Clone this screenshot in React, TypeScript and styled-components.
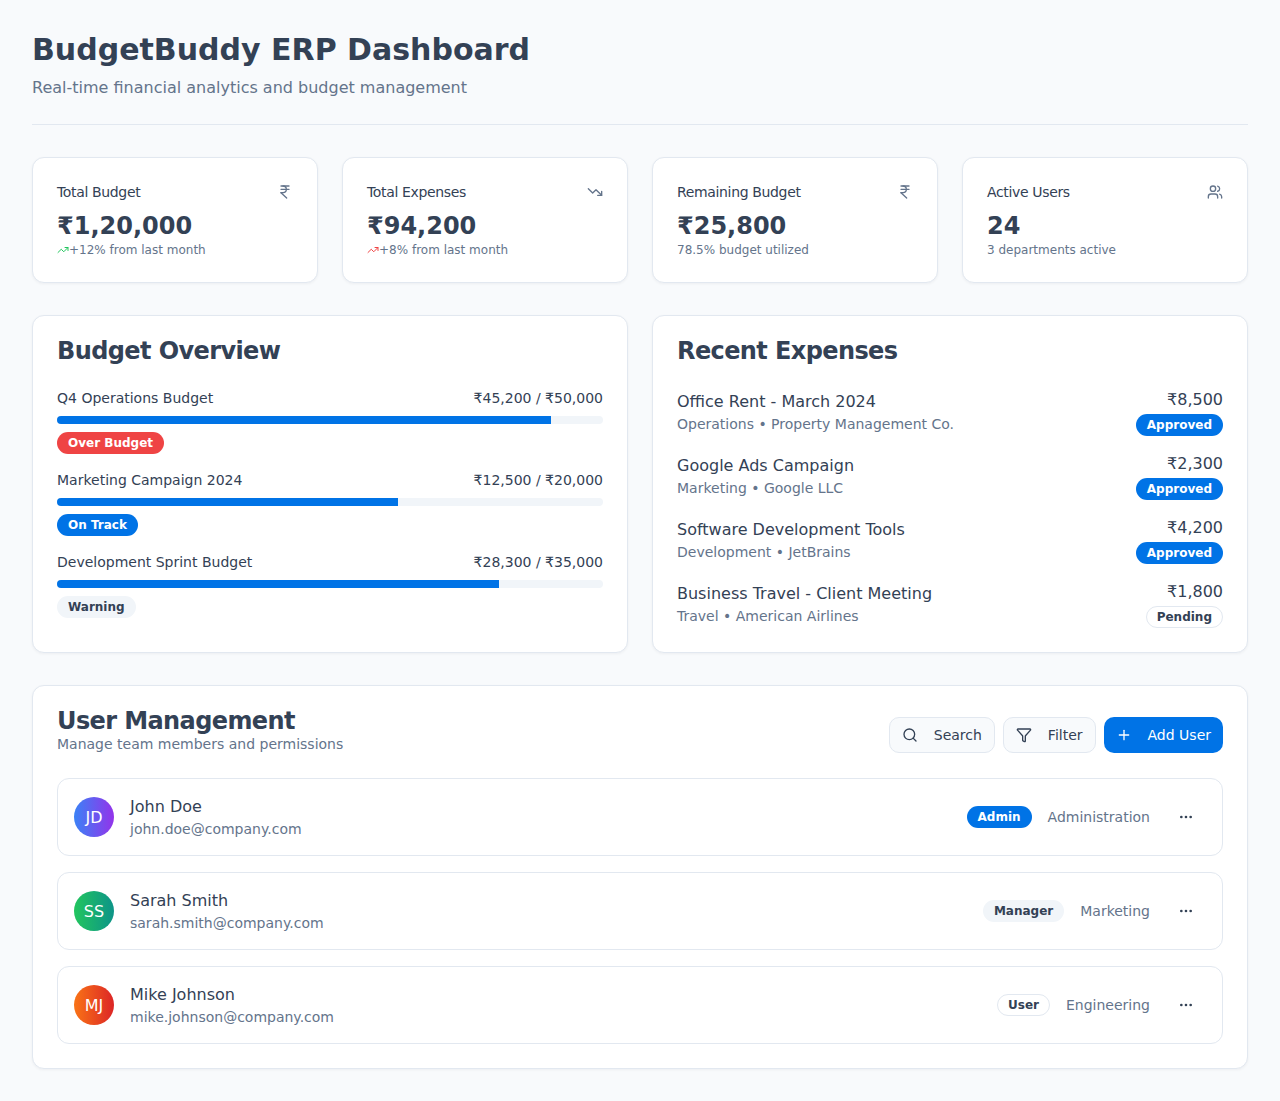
import React from "react";
import styled, { createGlobalStyle } from "styled-components";
import { Ellipsis, Funnel, IndianRupee, Plus, Search, TrendingDown, TrendingUp, Users } from "lucide-react";

const GlobalStyle = createGlobalStyle`
  * { box-sizing: border-box; }
  body {
    margin: 0;
    background: #f8fafc;
    color: #334155;
    font-family: "DejaVu Sans", sans-serif;
  }
`;

const stats = [
  { title: "Total Budget", value: "₹1,20,000", note: "+12% from last month", icon: IndianRupee, trend: "#22c55e" },
  { title: "Total Expenses", value: "₹94,200", note: "+8% from last month", icon: TrendingDown, trend: "#ef4444" },
  { title: "Remaining Budget", value: "₹25,800", note: "78.5% budget utilized", icon: IndianRupee },
  { title: "Active Users", value: "24", note: "3 departments active", icon: Users },
];

const budgets = [
  { name: "Q4 Operations Budget", amount: "₹45,200 / ₹50,000", pct: 90.4, status: "Over Budget", tone: "danger" },
  { name: "Marketing Campaign 2024", amount: "₹12,500 / ₹20,000", pct: 62.5, status: "On Track", tone: "primary" },
  { name: "Development Sprint Budget", amount: "₹28,300 / ₹35,000", pct: 80.9, status: "Warning", tone: "muted" },
];

const expenses = [
  { name: "Office Rent - March 2024", meta: "Operations • Property Management Co.", amount: "₹8,500", status: "Approved", tone: "primary" },
  { name: "Google Ads Campaign", meta: "Marketing • Google LLC", amount: "₹2,300", status: "Approved", tone: "primary" },
  { name: "Software Development Tools", meta: "Development • JetBrains", amount: "₹4,200", status: "Approved", tone: "primary" },
  { name: "Business Travel - Client Meeting", meta: "Travel • American Airlines", amount: "₹1,800", status: "Pending", tone: "outline" },
];

const users = [
  { initials: "JD", name: "John Doe", email: "john.doe@company.com", role: "Admin", tone: "primary", dept: "Administration", from: "#3b82f6", to: "#9333ea" },
  { initials: "SS", name: "Sarah Smith", email: "sarah.smith@company.com", role: "Manager", tone: "muted", dept: "Marketing", from: "#22c55e", to: "#0d9488" },
  { initials: "MJ", name: "Mike Johnson", email: "mike.johnson@company.com", role: "User", tone: "outline", dept: "Engineering", from: "#f97316", to: "#dc2626" },
];

export default function App() {
  return (
    <Page>
      <GlobalStyle />
      <Header>
        <Title>BudgetBuddy ERP Dashboard</Title>
        <Subtitle>Real-time financial analytics and budget management</Subtitle>
      </Header>

      <StatGrid>
        {stats.map(s => (
          <StatCard key={s.title}>
            <StatTop>
              <StatTitle>{s.title}</StatTitle>
              <StatIcon>
                <s.icon size={16} strokeWidth={2} />
              </StatIcon>
            </StatTop>
            <StatValue>{s.value}</StatValue>
            <StatNote>
              {s.trend && <TrendingUp size={12} color={s.trend} strokeWidth={2} />}
              {s.note}
            </StatNote>
          </StatCard>
        ))}
      </StatGrid>

      <TwoCol>
        <Panel>
          <PanelTitle>Budget Overview</PanelTitle>
          <BudgetList>
            {budgets.map(b => (
              <BudgetItem key={b.name}>
                <BudgetRow>
                  <span>{b.name}</span>
                  <span>{b.amount}</span>
                </BudgetRow>
                <Track>
                  <Fill style={{ width: `${b.pct}%` }} />
                </Track>
                <BudgetBadge>
                  <Badge $tone={b.tone}>{b.status}</Badge>
                </BudgetBadge>
              </BudgetItem>
            ))}
          </BudgetList>
        </Panel>

        <Panel>
          <PanelTitle>Recent Expenses</PanelTitle>
          <ExpenseList>
            {expenses.map(e => (
              <ExpenseRow key={e.name}>
                <div>
                  <ExpenseName>{e.name}</ExpenseName>
                  <ExpenseMeta>{e.meta}</ExpenseMeta>
                </div>
                <ExpenseRight>
                  <ExpenseAmount>{e.amount}</ExpenseAmount>
                  <Badge $tone={e.tone}>{e.status}</Badge>
                </ExpenseRight>
              </ExpenseRow>
            ))}
          </ExpenseList>
        </Panel>
      </TwoCol>

      <UserPanel>
        <UserHead>
          <div>
            <PanelTitle>User Management</PanelTitle>
            <UserSub>Manage team members and permissions</UserSub>
          </div>
          <Actions>
            <ActionButton>
              <Search size={16} strokeWidth={2} />
              Search
            </ActionButton>
            <ActionButton>
              <Funnel size={16} strokeWidth={2} />
              Filter
            </ActionButton>
            <ActionButton $primary>
              <Plus size={16} strokeWidth={2} />
              Add User
            </ActionButton>
          </Actions>
        </UserHead>
        <UserList>
          {users.map(u => (
            <UserRow key={u.email}>
              <UserLeft>
                <Avatar $from={u.from} $to={u.to}>{u.initials}</Avatar>
                <div>
                  <UserName>{u.name}</UserName>
                  <UserEmail>{u.email}</UserEmail>
                </div>
              </UserLeft>
              <UserRight>
                <Badge $tone={u.tone}>{u.role}</Badge>
                <Dept>{u.dept}</Dept>
                <MoreButton>
                  <Ellipsis size={16} strokeWidth={2} />
                </MoreButton>
              </UserRight>
            </UserRow>
          ))}
        </UserList>
      </UserPanel>
    </Page>
  );
}

const Page = styled.div`
  padding: 32px;
  min-height: 1101px;
  background: #f8fafc;
`;

const Header = styled.header`
  border-bottom: 1px solid #e2e8f0;
  padding-bottom: 24px;
  margin-bottom: 32px;
`;

const Title = styled.h1`
  margin: 0 0 8px;
  font-size: 30px;
  line-height: 36px;
  font-weight: 700;
  color: #334155;
`;

const Subtitle = styled.p`
  margin: 0;
  font-size: 16px;
  line-height: 24px;
  color: #64748b;
`;

const StatGrid = styled.div`
  display: grid;
  grid-template-columns: repeat(4, 1fr);
  gap: 24px;
  margin-bottom: 32px;
`;

const Card = styled.div`
  background: #fff;
  border: 1px solid #e2e8f0;
  border-radius: 12px;
  box-shadow: 0 1px 3px rgba(15, 23, 42, 0.05);
`;

const StatCard = styled(Card)`
  padding: 24px;
  height: 126px;
`;

const StatTop = styled.div`
  display: flex;
  justify-content: space-between;
  align-items: center;
  height: 20px;
  margin-bottom: 8px;
`;

const StatTitle = styled.span`
  font-size: 14px;
  line-height: 20px;
  letter-spacing: -0.025em;
  color: #334155;
`;

const StatIcon = styled.span`
  display: flex;
  color: #64748b;
`;

const StatValue = styled.div`
  font-size: 24px;
  line-height: 32px;
  font-weight: 700;
  color: #334155;
`;

const StatNote = styled.div`
  display: flex;
  align-items: center;
  font-size: 12px;
  line-height: 16px;
  color: #64748b;
`;

const TwoCol = styled.div`
  display: grid;
  grid-template-columns: 1fr 1fr;
  gap: 24px;
  margin-bottom: 32px;
`;

const Panel = styled(Card)`
  padding: 20px 24px 24px;
  height: 338px;
`;

const PanelTitle = styled.h2`
  margin: 0;
  font-size: 24px;
  line-height: 30px;
  font-weight: 700;
  letter-spacing: -0.025em;
  color: #334155;
`;

const BudgetList = styled.div`
  display: flex;
  flex-direction: column;
  gap: 16px;
  margin-top: 22px;
`;

const BudgetItem = styled.div``;

const BudgetRow = styled.div`
  display: flex;
  justify-content: space-between;
  font-size: 14px;
  line-height: 20px;
  color: #334155;
  margin-bottom: 8px;
`;

const Track = styled.div`
  height: 8px;
  border-radius: 999px;
  background: #f1f5f9;
  overflow: hidden;
`;

const Fill = styled.div`
  height: 100%;
  background: #0073e6;
`;

const BudgetBadge = styled.div`
  margin-top: 8px;
`;

const badgeTones: Record<string, string> = {
  primary: "background: #0073e6; color: #fff; border-color: transparent;",
  danger: "background: #ef4444; color: #fff; border-color: transparent;",
  muted: "background: #f1f5f9; color: #334155; border-color: transparent;",
  outline: "background: #fff; color: #334155; border-color: #e2e8f0;",
};

const Badge = styled.span<{ $tone: string }>`
  display: inline-block;
  border: 1px solid;
  border-radius: 999px;
  padding: 2px 10px;
  font-size: 12px;
  line-height: 16px;
  font-weight: 700;
  ${p => badgeTones[p.$tone]}
`;

const ExpenseList = styled.div`
  display: flex;
  flex-direction: column;
  gap: 16px;
  margin-top: 22px;
`;

const ExpenseRow = styled.div`
  display: flex;
  justify-content: space-between;
  align-items: center;
  height: 48px;
`;

const ExpenseName = styled.div`
  font-size: 16px;
  line-height: 24px;
  color: #334155;
`;

const ExpenseMeta = styled.div`
  font-size: 14px;
  line-height: 20px;
  color: #64748b;
`;

const ExpenseRight = styled.div`
  display: flex;
  flex-direction: column;
  align-items: flex-end;
`;

const ExpenseAmount = styled.div`
  font-size: 16px;
  line-height: 24px;
  margin-bottom: 2px;
  color: #334155;
`;

const UserPanel = styled(Card)`
  padding: 20px 24px 24px;
`;

const UserHead = styled.div`
  display: flex;
  justify-content: space-between;
  align-items: flex-start;
  margin-bottom: 25px;
`;

const UserSub = styled.p`
  margin: 0;
  font-size: 14px;
  line-height: 16px;
  color: #64748b;
`;

const Actions = styled.div`
  display: flex;
  gap: 8px;
  margin-top: 11px;
`;

const ActionButton = styled.button<{ $primary?: boolean }>`
  display: flex;
  align-items: center;
  gap: 16px;
  height: 36px;
  padding: 0 12px;
  border: ${p => (p.$primary ? "0" : "1px solid #e2e8f0")};
  border-radius: 10px;
  background: ${p => (p.$primary ? "#0073e6" : "#f8fafc")};
  color: ${p => (p.$primary ? "#fff" : "#334155")};
  font-family: inherit;
  font-size: 14px;
`;

const UserList = styled.div`
  display: flex;
  flex-direction: column;
  gap: 16px;
`;

const UserRow = styled.div`
  display: flex;
  justify-content: space-between;
  align-items: center;
  height: 78px;
  padding: 0 16px;
  background: #fff;
  border: 1px solid #e2e8f0;
  border-radius: 12px;
`;

const UserLeft = styled.div`
  display: flex;
  align-items: center;
  gap: 16px;
`;

const Avatar = styled.div<{ $from: string; $to: string }>`
  display: flex;
  align-items: center;
  justify-content: center;
  width: 40px;
  height: 40px;
  border-radius: 50%;
  background: linear-gradient(90deg, ${p => p.$from}, ${p => p.$to});
  color: #fff;
  font-size: 16px;
`;

const UserName = styled.div`
  font-size: 16px;
  line-height: 24px;
  color: #334155;
`;

const UserEmail = styled.div`
  font-size: 14px;
  line-height: 20px;
  color: #64748b;
`;

const UserRight = styled.div`
  display: flex;
  align-items: center;
  gap: 16px;
`;

const Dept = styled.span`
  font-size: 14px;
  line-height: 20px;
  color: #64748b;
`;

const MoreButton = styled.button`
  display: flex;
  align-items: center;
  justify-content: center;
  width: 40px;
  height: 36px;
  padding: 0;
  border: 0;
  background: transparent;
  color: #334155;
`;
